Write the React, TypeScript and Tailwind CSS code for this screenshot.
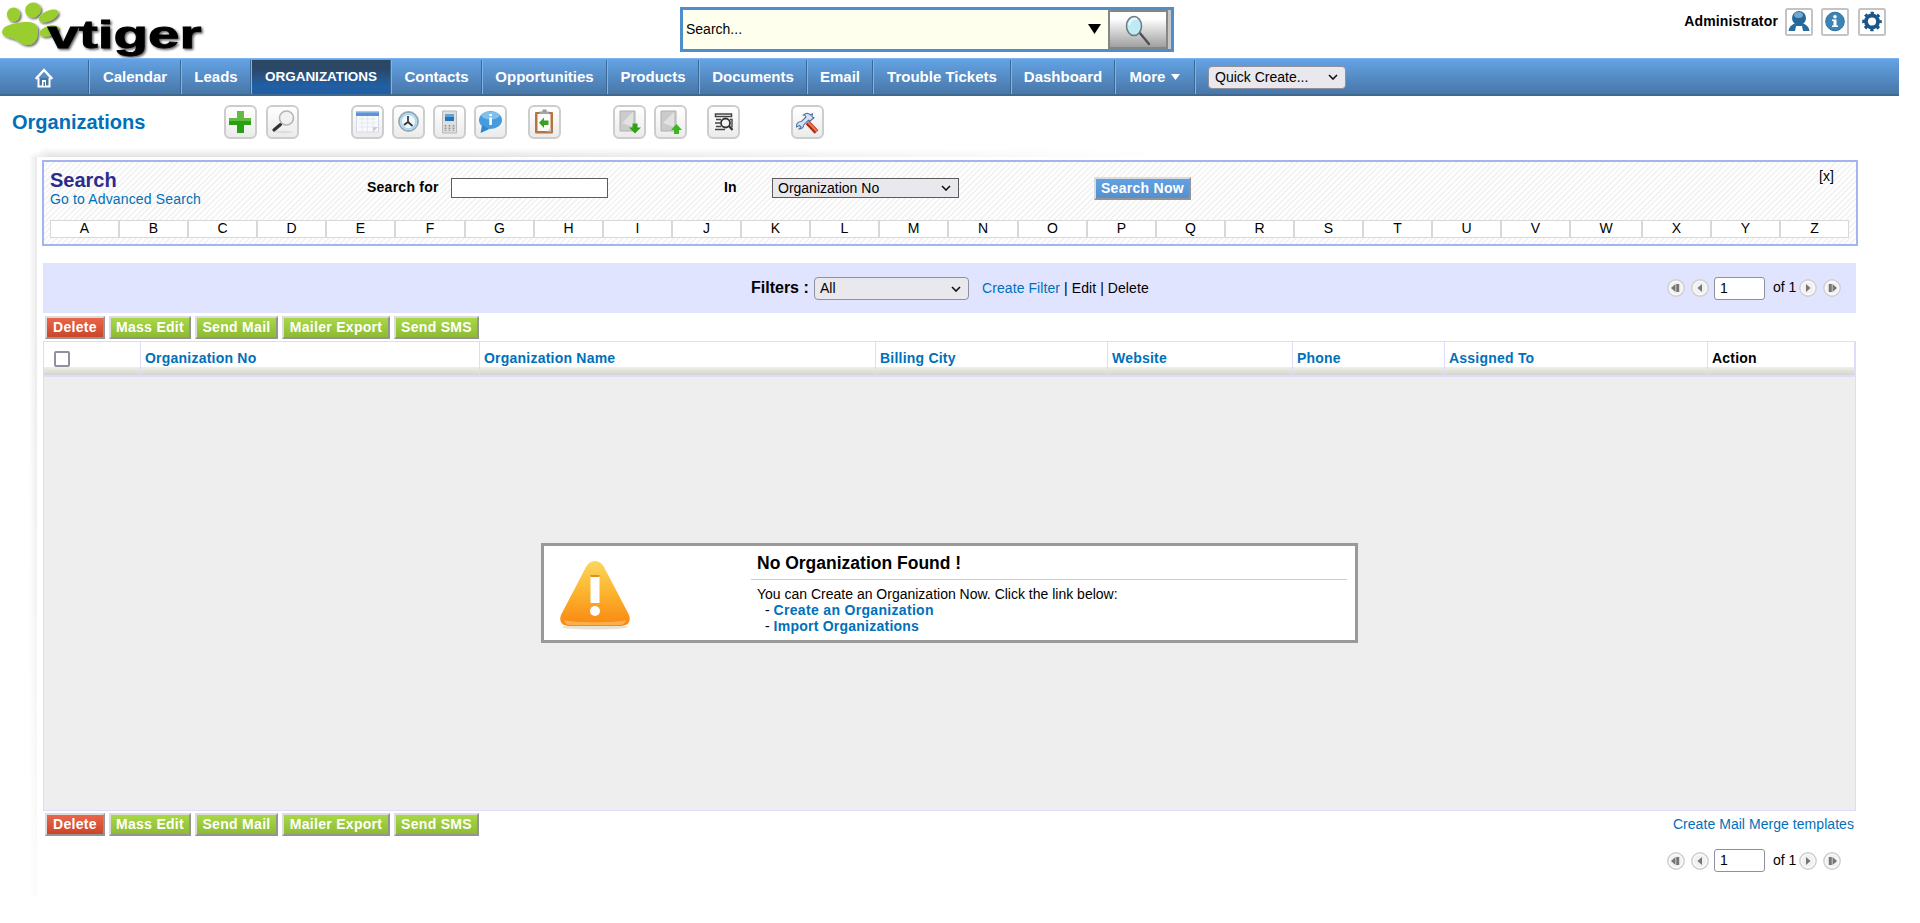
import type { ReactNode } from "react";

const letters = "ABCDEFGHIJKLMNOPQRSTUVWXYZ".split("");

function Tool({ children, gap = "" }: { children: ReactNode; gap?: string }) {
  return (
    <button className={`h-[34px] w-[33px] shrink-0 rounded-[6px] border-2 border-[#cdcdcd] bg-linear-to-b from-white to-[#ebebeb] ${gap}`}>
      <svg viewBox="0 0 29 30" className="block h-[30px] w-[29px]">{children}</svg>
    </button>
  );
}

function Chevron() {
  return (
    <svg viewBox="0 0 10 6" className="mt-px mr-[7px] ml-auto h-[6px] w-[10px]">
      <path d="M1 1l4 4 4-4" fill="none" stroke="#111" strokeWidth="1.6" />
    </svg>
  );
}

function NavItem({ children, width, active }: { children: ReactNode; width: string; active?: boolean }) {
  return (
    <div
      className={`flex h-[34px] shrink-0 items-center justify-center border-r border-l border-r-[#3b6894] border-l-[#7db4ea] whitespace-nowrap ${width} ${
        active ? "bg-linear-to-b from-[#2b4766] from-25% to-[#205fa3] to-75% text-[13.5px]" : "pt-px"
      }`}
    >
      {children}
    </div>
  );
}

function Btn({ children, width, color = "bg-linear-to-b from-[#a8d847] to-[#8ebb33]" }: { children: ReactNode; width: string; color?: string }) {
  return (
    <button
      className={`flex h-[23px] shrink-0 items-center justify-center border-2 border-t-[#dcdcdc] border-r-[#949494] border-b-[#949494] border-l-[#dcdcdc] pb-px text-[14px] font-bold tracking-[0.3px] whitespace-nowrap text-white ${width} ${color}`}
    >
      {children}
    </button>
  );
}

function Actions() {
  return (
    <div className="flex gap-1">
      <Btn width="w-[60px]" color="bg-linear-to-b from-[#ea6549] to-[#cb452a]">Delete</Btn>
      <Btn width="w-[82px]">Mass Edit</Btn>
      <Btn width="w-[83px]">Send Mail</Btn>
      <Btn width="w-[108px]">Mailer Export</Btn>
      <Btn width="w-[85px]">Send SMS</Btn>
    </div>
  );
}

function Round({ d, gap = "" }: { d: string; gap?: string }) {
  return (
    <svg viewBox="0 0 18 18" className={`h-[18px] w-[18px] shrink-0 ${gap}`}>
      <circle cx="9" cy="9" r="8.2" fill="#f1f1f1" stroke="#cfcfcf" strokeWidth="1.4" />
      <circle cx="9" cy="9" r="6.6" fill="none" stroke="#fff" />
      <path d={d} fill="#757575" />
    </svg>
  );
}

function Pager() {
  return (
    <div className="flex items-center">
      <Round d="M8.500 5v8L4 9zM9.200 5h3v8h-3z" />
      <Round gap="ml-[6px]" d="M11 5v8L6.500 9z" />
      <div className="ml-[5px] flex h-[23px] w-[51px] items-center rounded-[3px] border border-[#8f8f9d] bg-white pb-px pl-[5px]">1</div>
      <span className="mr-[3px] ml-[8px] pb-[2px] whitespace-nowrap">of 1</span>
      <Round d="M7 5v8l4.500-4z" />
      <Round gap="ml-[6px]" d="M5.800 5h3v8h-3zM9.500 5v8L14 9z" />
    </div>
  );
}

function Th({ children, width, color = "text-[#0070ba]" }: { children?: ReactNode; width: string; color?: string }) {
  return (
    <div className={`flex h-[33px] shrink-0 flex-col border-r border-[#ddddfb] ${width}`}>
      <div className={`flex h-[25px] items-end pb-px pl-[4px] font-bold tracking-[0.22px] whitespace-nowrap ${color}`}>{children}</div>
      <div className="mt-auto h-2 bg-linear-to-b from-[#efefeb] to-[#d5d5ce]" />
    </div>
  );
}

export default function App() {
  return (
    <div className="h-[923px] w-[1920px] overflow-hidden bg-white font-['Liberation_Sans',Arial,sans-serif] text-[14px] leading-4 text-black">
      <header className="flex h-[58px] items-start">
        <svg viewBox="0 0 210 58" className="h-[58px] w-[210px] shrink-0">
          <defs>
            <filter id="shadow" x="-10%" y="-10%" width="130%" height="140%">
              <feDropShadow dx="1.500" dy="1.500" stdDeviation="1" floodColor="#000" floodOpacity=".65" />
            </filter>
          </defs>
          <g fill="#9acd2e" filter="url(#shadow)">
            <ellipse cx="13.500" cy="14.500" rx="6.600" ry="7" />
            <ellipse cx="33" cy="10" rx="8" ry="7.400" transform="rotate(-30 33 10)" />
            <ellipse cx="48.500" cy="16" rx="10.500" ry="5.200" transform="rotate(-24 48.500 16)" />
            <ellipse cx="49" cy="31" rx="10" ry="5" transform="rotate(-18 49 31)" />
            <path d="M2 32C3 26 9 25 15 23.500c6-1.500 14-2.500 19 0 5 3 4 7 3.500 12C37 41 33 45 28 45c-6 .5-9-4-14-6C8 37 2 36 2 32z" />
          </g>
          <text x="47.500" y="48" textLength="154" lengthAdjust="spacingAndGlyphs" fontSize="38" fontWeight="700" filter="url(#shadow)" stroke="#000" strokeWidth=".8">
            vtiger
          </text>
        </svg>
        <div className="mt-[7px] ml-[470px] flex h-[45px] w-[494px] shrink-0 border-[3px] border-[#4f8ecd] bg-[#ffffee]">
          <div className="flex w-[425px] items-center pl-[3px]">
            <span className="pb-px">Search...</span>
            <svg viewBox="0 0 13 10" className="mr-[7px] mb-px ml-auto h-[10px] w-[13px]"><path d="M0 0h13L6.500 10z" /></svg>
          </div>
          <div className="h-[39px] w-[60px] border-2 border-[#858585] bg-linear-to-b from-white from-20% to-[#a0a0a0]">
            <svg viewBox="0 0 56 35" className="h-[35px] w-[56px]">
              <path d="M29 20l10 12" stroke="#505050" strokeWidth="2.400" strokeLinecap="round" />
              <ellipse cx="24" cy="14" rx="7.500" ry="9.500" fill="#bfe9f5" stroke="#697a80" strokeWidth="1.500" />
              <path d="M19 13c1-5 4-7 8-6" stroke="#e8fbff" strokeWidth="2" fill="none" />
            </svg>
          </div>
          <div className="w-[3px] bg-[#c6c6c6]" />
        </div>
        <span className="mt-[13px] ml-[508px] w-[96px] text-right font-bold tracking-[0.15px]">Administrator</span>
        <div className="mt-2 ml-[7px] flex">
          <svg viewBox="0 0 28 28" className="h-7 w-7">
            <rect x="1" y="1" width="26" height="26" rx="1.500" fill="#fff" stroke="#c4c4c4" strokeWidth="2" />
            <path d="M3.500 23c.5-4 3-6 6-7.500h9c3 1.500 5.500 3.500 6 7.500h-6.500l-1-5h-6l-1 5z" fill="#286c9f" />
            <circle cx="14" cy="10" r="7" fill="#24689b" />
            <ellipse cx="13.500" cy="7" rx="4.500" ry="3" fill="#75a9cb" />
          </svg>
          <svg viewBox="0 0 28 28" className="ml-2 h-7 w-7">
            <rect x="1" y="1" width="26" height="26" rx="1.500" fill="#fff" stroke="#c4c4c4" strokeWidth="2" />
            <circle cx="14" cy="13.500" r="9.300" fill="#3c84b5" stroke="#2d6d9d" />
            <circle cx="14" cy="8.800" r="1.800" fill="#fff" />
            <path d="M11 11.500h4.500v6H17V19h-6v-1.500h1.500V13H11z" fill="#fff" />
          </svg>
          <svg viewBox="0 0 28 28" className="ml-[9px] h-7 w-7">
            <rect x="1" y="1" width="26" height="26" rx="1.500" fill="#fff" stroke="#c4c4c4" strokeWidth="2" />
            <circle cx="14" cy="13.500" r="8.300" fill="none" stroke="#1c5688" strokeWidth="3" strokeDasharray="3.200 3.320" strokeDashoffset="1.600" />
            <circle cx="14" cy="13.500" r="6" fill="none" stroke="#1c5688" strokeWidth="3.800" />
          </svg>
        </div>
      </header>

      <nav className="flex h-[38px] w-[1899px] items-center border-t border-b-2 border-t-[#7db4f0] border-b-[#3f698f] bg-linear-to-b from-[#64a3e5] to-[#4877a8] text-[15px] font-bold text-white">
        <div className="flex h-[34px] w-[89px] shrink-0 items-center justify-center border-r border-[#3b6894]">
          <svg viewBox="0 0 18 20" className="mt-[3px] h-5 w-[18px]">
            <path d="M3.500 10v8.500h11V10" fill="#47749f" stroke="#fff" strokeWidth="2" />
            <path d="M.8 11L9 2l8.200 9" fill="none" stroke="#fff" strokeWidth="2.400" />
            <path d="M7 12h4v6H7z" fill="#fff" /><path d="M8.500 14h1.500v4H8.500z" fill="#47749f" />
          </svg>
        </div>
        <NavItem width="w-[92px]">Calendar</NavItem>
        <NavItem width="w-[70px]">Leads</NavItem>
        <NavItem width="w-[140px]" active>ORGANIZATIONS</NavItem>
        <NavItem width="w-[91px]">Contacts</NavItem>
        <NavItem width="w-[125px]">Opportunities</NavItem>
        <NavItem width="w-[92px]">Products</NavItem>
        <NavItem width="w-[108px]">Documents</NavItem>
        <NavItem width="w-[66px]">Email</NavItem>
        <NavItem width="w-[138px]">Trouble Tickets</NavItem>
        <NavItem width="w-[104px]">Dashboard</NavItem>
        <NavItem width="w-[80px]">
          More
          <svg viewBox="0 0 9 6" className="ml-[6px] h-[6px] w-[9px]"><path d="M0 0h9L4.500 6z" fill="#fff" /></svg>
        </NavItem>
        <div className="flex h-[34px] items-center border-l border-[#7db4ea] pl-[12px]">
          <div className="mt-px flex h-[23px] w-[138px] items-center rounded-[4px] border border-[#8f8f9d] bg-[#e9e9ed] pb-px pl-[6px] text-[14px] font-normal text-black">
            Quick Create...<Chevron />
          </div>
        </div>
      </nav>

      <div className="flex h-[52px] items-start pt-[9px]">
        <h1 className="w-[224px] shrink-0 pt-[5px] pl-3 text-[20px] leading-6 font-bold text-[#0070ba]">Organizations</h1>
        <Tool>
          <path d="M11 4h7v7h7v7h-7v8h-7v-8H3v-7h8z" fill="#27a012" />
          <path d="M11 4h7v7h7v3H3v-3h8z" fill="#62b943" />
        </Tool>
        <Tool gap="ml-[9px]">
          <ellipse cx="16" cy="25" rx="9" ry="1.200" fill="#ddd" />
          <path d="M12.500 17.500l-6.500 5.500" stroke="#333" strokeWidth="3.200" strokeLinecap="round" />
          <circle cx="18.500" cy="11" r="7" fill="#f2f2f2" stroke="#b4b4b4" strokeWidth="1.600" />
        </Tool>
        <Tool gap="ml-[52px]">
          <path d="M3.500 5h22v20h-22z" fill="#f8f9fb" stroke="#d4dae2" />
          <path d="M3 4h23v5H3z" fill="#5b93d6" /><path d="M3 4h23v1.500H3z" fill="#a9c9ec" />
          <path d="M6 12h17M6 16h17M6 20h17M9 9v15M14.500 9v15M20 9v15" stroke="#e4e9ef" />
          <path d="M20 25v-5h5z" fill="#ccc" />
        </Tool>
        <Tool gap="ml-2">
          <circle cx="14.500" cy="14.500" r="9.500" fill="#eef7fc" stroke="#93a8b4" strokeWidth="1.800" />
          <circle cx="14.500" cy="14.500" r="7.500" fill="none" stroke="#acd7ee" strokeWidth="1.800" />
          <path d="M14 9v6l4.500 4M14 15l-4 3" fill="none" stroke="#333" strokeWidth="1.700" />
        </Tool>
        <Tool gap="ml-2">
          <path d="M7.500 4h14v22h-14z" fill="#dedede" stroke="#b8b8b8" />
          <path d="M10 7h9v7h-9z" fill="#2671bd" /><path d="M10 7h9v3h-9z" fill="#63a3db" />
          <path d="M10.500 18v6M14.500 18v6M18.500 18v6" stroke="#8d8d8d" strokeWidth="1.700" strokeDasharray="1.600 1" />
        </Tool>
        <Tool gap="ml-2">
          <ellipse cx="14.500" cy="13" rx="11.500" ry="9" fill="#459bdc" />
          <path d="M6 18l-1.500 8 9-4z" fill="#3187ce" />
          <ellipse cx="14.500" cy="8.500" rx="9" ry="4" fill="#82bfeb" />
          <path d="M13.300 7h2.600v2h-2.600zM13.300 10.500h2.600v7.500h-2.600z" fill="#fff" />
        </Tool>
        <Tool gap="ml-[21px]">
          <rect x="5" y="5" width="18" height="21.500" rx="1" fill="#b8743e" /><path d="M7.500 7h13v17h-13z" fill="#fbfbfb" />
          <path d="M9.500 4.500h9.500V7H9.500z" fill="#a5a5a5" /><path d="M12.500 2.500h4V5h-4z" fill="#999" />
          <path d="M14 10.500v3h4.500v4.500H14v3l-5-5.200z" fill="#38a11f" />
          <path d="M17 24.500l4-4v4z" fill="#c9d0d5" />
        </Tool>
        <Tool gap="ml-[52px]">
          <path d="M5 4h15v20H5z" fill="#cbcbcb" stroke="#b0b0b0" /><path d="M7 16l11-11v15z" fill="#e2e2e2" />
          <path d="M17.500 16.500h5v4H26L20 26.500l-6-6h3.500z" fill="#32a316" />
        </Tool>
        <Tool gap="ml-2">
          <path d="M5 4h15v20H5z" fill="#cbcbcb" stroke="#b0b0b0" /><path d="M7 16l11-11v15z" fill="#e2e2e2" />
          <path d="M18 27h5v-4h3l-5.500-6-5.500 6h3z" fill="#3fb51c" />
        </Tool>
        <Tool gap="ml-5">
          <path d="M6.500 7h16v2.500h-16z" fill="#fff" stroke="#444" strokeWidth="1.500" />
          <path d="M7 12.500h5M6 16h5M7 19.500h5M6 22.500h10M21 12.500h2v8" fill="none" stroke="#444" strokeWidth="1.400" />
          <circle cx="16.500" cy="16" r="4.500" fill="#f4f4f4" stroke="#333" strokeWidth="1.800" />
          <path d="M20 19l3.500 4" stroke="#333" strokeWidth="2.200" />
        </Tool>
        <Tool gap="ml-[51px]">
          <path d="M3.500 20c-.5-3 1.500-5.500 5-5.500L13 10c-.3-1.500-1.300-2-2.500-2 2-1.800 5-1.800 7 0l2-1.200-.5 3 2 1-4 3.200-1.500-.8-5 5c0 2.500-2 4-4.500 3.800l2-2-1.500-1.500z" fill="#d5e3f4" stroke="#4f74a8" strokeWidth="1.100" />
          <path d="M14.500 15.500l9 9.500" stroke="#a82a18" strokeWidth="5" /><path d="M15 15l9 9.500" stroke="#f27a45" strokeWidth="2" />
        </Tool>
      </div>

      <div className="flex h-[9px] pl-[29px]">
        <div className="h-[9px] w-5 rounded-tl-[12px] bg-linear-to-br from-white from-35% to-[#e5e5e5]" />
        <div className="h-[9px] w-[1120px] bg-linear-to-b from-white to-[#e2e2e2] mask-r-from-35% mask-r-to-100%" />
      </div>

      <main className="flex h-[739px] pl-[29px]">
        <div className="w-2 shrink-0 bg-linear-to-r from-white to-[#e9e9e9] mask-b-from-20% mask-b-to-120%" />
        <div className="ml-[5px] w-[1816px] pt-[3px]">
          <section className="h-[86px] border-2 border-[#a5b4ef] bg-[repeating-linear-gradient(135deg,#fff_0px,#fff_2px,#f4f4f4_2px,#f4f4f4_4px)] pl-[6px]">
            <div className="flex h-[58px] items-start">
              <div className="w-[317px] pt-2">
                <div className="h-5 text-[20px] leading-5 font-bold text-[#2c2c8c]">Search</div>
                <div className="pt-px tracking-[0.15px] text-[#0070ba]">Go to Advanced Search</div>
              </div>
              <span className="mt-[17px] w-[84px] font-bold tracking-[0.25px]">Search for</span>
              <div className="mt-4 h-5 w-[157px] border border-[#5c5c5c] bg-white" />
              <span className="mt-[17px] ml-[116px] w-[48px] font-bold">In</span>
              <div className="mt-4 flex h-5 w-[187px] items-center border border-[#5c5c5c] bg-[#e9e9ed] pb-px pl-[5px]">Organization No<Chevron /></div>
              <div className="mt-[15px] ml-[135px]">
                <Btn width="w-[97px]" color="bg-linear-to-b from-[#61a1e3] to-[#5590cc]">Search Now</Btn>
              </div>
              <span className="mt-[6px] ml-[628px]">[x]</span>
            </div>
            <div className="flex">
              {letters.map((l) => (
                <div
                  key={l}
                  className={`flex h-[18px] shrink-0 items-center justify-center border border-[#d8d8d8] bg-white pb-[2px] ${l === "W" ? "w-[72px]" : l === "F" || l === "N" ? "w-[70px]" : "w-[69px]"}`}
                >
                  {l}
                </div>
              ))}
            </div>
          </section>

          <section className="mt-[17px] ml-px flex h-[50px] w-[1813px] items-center bg-[#e1e4ff]">
            <span className="ml-[708px] w-[63px] shrink-0 pb-px text-[16px] font-bold">Filters :</span>
            <div className="flex h-[23px] w-[155px] shrink-0 items-center rounded-[4px] border border-[#8f8f9d] bg-[#e9e9ed] pl-[5px]">All<Chevron /></div>
            <span className="ml-[13px] w-[685px] tracking-[0.08px] whitespace-nowrap"><span className="text-[#0070ba]">Create Filter</span> | Edit | Delete</span>
            <Pager />
          </section>

          <div className="mt-[3px] ml-[3px]"><Actions /></div>

          <section className="mt-[2px] ml-px w-[1813px] border border-[#ddddfb]">
            <div className="flex border-b-2 border-[#ddddfb]">
              <Th width="w-[97px]"><span className="mb-[-1px] ml-[6px] h-4 w-4 rounded-[2px] border-2 border-[#8f8f9d] bg-white" /></Th>
              <Th width="w-[339px]">Organization No</Th>
              <Th width="w-[396px]">Organization Name</Th>
              <Th width="w-[232px]">Billing City</Th>
              <Th width="w-[185px]">Website</Th>
              <Th width="w-[152px]">Phone</Th>
              <Th width="w-[263px]">Assigned To</Th>
              <Th width="w-[147px]" color="text-black">Action</Th>
            </div>
            <div className="flex h-[433px] items-start bg-[#eeeeee] pt-[166px] pl-[497px]">
              <div className="flex h-[100px] w-[817px] border-[3px] border-[#999999] bg-white">
                <svg viewBox="0 0 74 72" className="mt-[14px] ml-[14px] h-[72px] w-[74px] shrink-0">
                  <defs>
                    <linearGradient id="warn" x1="0" y1="0" x2="0" y2="1">
                      <stop offset="0" stopColor="#fbd75d" /><stop offset=".5" stopColor="#fdb22d" /><stop offset="1" stopColor="#f98712" />
                    </linearGradient>
                  </defs>
                  <ellipse cx="37" cy="67" rx="33" ry="2.500" fill="#e7e2d2" />
                  <path d="M28 7c4-8 14-8 18 0l24 46c4 7 1 13-7 13H11C3 66 0 60 4 53z" fill="url(#warn)" />
                  <path d="M6 60c5 3 57 3 62 0-1 4-4 5-7 5H13c-4 0-6-1-7-5z" fill="#ffae4c" />
                  <path d="M32.500 16h9v27h-9z" fill="#fff" /><path d="M32.500 15h9v2h-9z" fill="#e28d1c" />
                  <circle cx="37" cy="51" r="5" fill="#fff" />
                </svg>
                <div className="ml-[119px] w-[596px] pt-[5px]">
                  <div className="h-[29px] border-b border-[#cccccc] pl-[6px] text-[17.5px] leading-6 font-bold">No Organization Found !</div>
                  <div className="pt-[6px] pl-[6px]">You can Create an Organization Now. Click the link below:</div>
                  <div className="pl-[14px]">- <b className="tracking-[0.32px] text-[#0070ba]">Create an Organization</b></div>
                  <div className="pl-[14px]">- <b className="tracking-[0.24px] text-[#0070ba]">Import Organizations</b></div>
                </div>
              </div>
            </div>
          </section>

          <div className="mt-[2px] ml-[3px] flex w-[1809px] justify-between">
            <Actions />
            <span className="pt-[3px] tracking-[0.05px] text-[#0070ba]">Create Mail Merge templates</span>
          </div>
          <div className="mt-[13px] ml-[1625px]"><Pager /></div>
        </div>
      </main>
    </div>
  );
}
